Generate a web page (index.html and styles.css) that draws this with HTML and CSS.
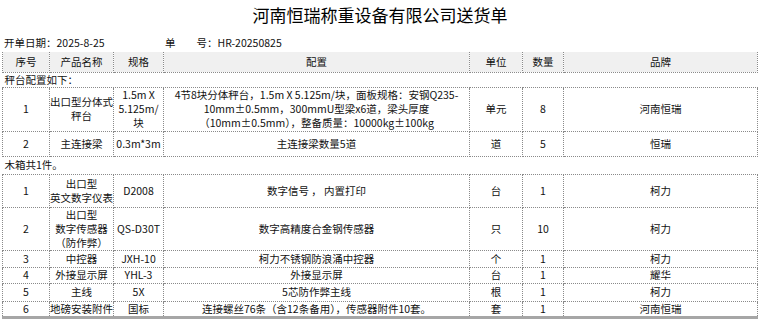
FILE: index.html
```html
<!DOCTYPE html>
<html>
  <head>
    <title>河南恒瑞称重设备有限公司送货单</title>
    <meta charset="utf-8" />
    <link rel="stylesheet" href="styles.css">
  </head>
  <body>
    <h1 class="title">河南恒瑞称重设备有限公司送货单</h1>
    <div class="info">
      <span class="info-date">开单日期：2025-8-25</span>
      <span class="info-no">单<span class="gap"></span>号：HR-20250825</span>
    </div>

    <table class="sheet">
      <colgroup>
        <col class="c-no">
        <col class="c-name">
        <col class="c-spec">
        <col class="c-conf">
        <col class="c-unit">
        <col class="c-qty">
        <col class="c-brand">
      </colgroup>
      <tr class="head">
        <th>序号</th>
        <th>产品名称</th>
        <th>规格</th>
        <th>配置</th>
        <th>单位</th>
        <th>数量</th>
        <th>品牌</th>
      </tr>

      <tr class="section s1"><td colspan="7">秤台配置如下：</td></tr>
      <tr class="h44">
        <td>1</td>
        <td>出口型分体式<br>秤台</td>
        <td>1.5m X<br>5.125m/<br>块</td>
        <td>4节8块分体秤台，1.5m X 5.125m/块，面板规格：安钢Q235-<br>10mm±0.5mm，300mmU型梁x6道，梁头厚度<br>（10mm±0.5mm），整备质量：10000kg±100kg</td>
        <td>单元</td>
        <td>8</td>
        <td>河南恒瑞</td>
      </tr>
      <tr class="h25">
        <td>2</td>
        <td>主连接梁</td>
        <td>0.3m*3m</td>
        <td>主连接梁数量5道</td>
        <td>道</td>
        <td>5</td>
        <td>恒瑞</td>
      </tr>

      <tr class="section s2"><td colspan="7">木箱共1件。</td></tr>
      <tr class="h33">
        <td>1</td>
        <td>出口型<br>英文数字仪表</td>
        <td>D2008</td>
        <td>数字信号 ， 内置打印</td>
        <td>台</td>
        <td>1</td>
        <td>柯力</td>
      </tr>
      <tr class="h43">
        <td>2</td>
        <td>出口型<br>数字传感器<br>（防作弊）</td>
        <td>QS-D30T</td>
        <td>数字高精度合金钢传感器</td>
        <td>只</td>
        <td>10</td>
        <td>柯力</td>
      </tr>
      <tr class="h17">
        <td>3</td>
        <td>中控器</td>
        <td>JXH-10</td>
        <td>柯力不锈钢防浪涌中控器</td>
        <td>个</td>
        <td>1</td>
        <td>柯力</td>
      </tr>
      <tr class="h16">
        <td>4</td>
        <td>外接显示屏</td>
        <td>YHL-3</td>
        <td>外接显示屏</td>
        <td>台</td>
        <td>1</td>
        <td>耀华</td>
      </tr>
      <tr class="h18">
        <td>5</td>
        <td>主线</td>
        <td>5X</td>
        <td>5芯防作弊主线</td>
        <td>根</td>
        <td>1</td>
        <td>柯力</td>
      </tr>
      <tr class="h16 last">
        <td>6</td>
        <td>地磅安装附件</td>
        <td>国标</td>
        <td>连接螺丝76条（含12条备用），传感器附件10套。</td>
        <td>套</td>
        <td>1</td>
        <td>河南恒瑞</td>
      </tr>
    </table>
  </body>
</html>
```

FILE: styles.css
```css
body {
  margin: 0;
  background: #fff;
  color: #111;
  font: 10.5px/14px "Noto Sans CJK SC", "Noto Sans", sans-serif;
}

.title {
  margin: 0;
  height: 34px;
  line-height: 30px;
  font-size: 17px;
  font-weight: normal;
  text-align: center;
  color: #000;
}

.info {
  display: flex;
  height: 18px;
  line-height: 18px;
  padding-left: 4px;
}

.info-date {
  width: 161px;
}

.gap {
  display: inline-block;
  width: 21px;
}

.sheet {
  margin-left: 2px;
  width: 755px;
  table-layout: fixed;
  border-collapse: collapse;
}

.c-no { width: 47px; }
.c-name { width: 64px; }
.c-spec { width: 50px; }
.c-conf { width: 306px; }
.c-unit { width: 53px; }
.c-qty { width: 41px; }
.c-brand { width: 194px; }

.sheet th,
.sheet td {
  padding: 0;
  border: 1px dotted #8a8a8a;
  text-align: center;
  vertical-align: middle;
  white-space: nowrap;
  overflow: hidden;
}

.sheet th {
  font-weight: normal;
  background: #f0f0f0;
  border-top: none;
}

.head { height: 20px; }

.section td {
  text-align: left;
  padding-left: 2px;
  border-left: none;
  border-right: none;
}

.s1 { height: 15px; }
.s2 { height: 18px; }

.h44 { height: 44px; }
.h43 { height: 43px; }
.h33 { height: 33px; }
.h25 { height: 25px; }
.h18 { height: 18px; }
.h17 { height: 17px; }
.h16 { height: 16px; }

.last td {
  border-bottom: 3px solid #a6a6a6;
}
```
